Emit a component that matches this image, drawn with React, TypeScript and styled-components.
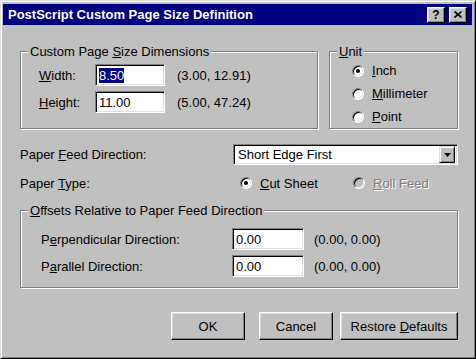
import styled, { createGlobalStyle } from 'styled-components';

const GlobalStyle = createGlobalStyle`
  html, body {
    margin: 0;
    padding: 0;
    background: #c0c0c0;
  }
  body {
    font-family: "Liberation Sans", Arial, sans-serif;
    font-size: 13px;
    color: #000;
  }
`;

const Window = styled.div`
  box-sizing: border-box;
  width: 476px;
  height: 359px;
  background: #c0c0c0;
  border: 1px solid;
  border-color: #dfdfdf #000 #000 #dfdfdf;
  box-shadow: inset 1px 1px 0 #fff, inset -1px -1px 0 #808080;
  padding: 3px 3px 2px 2px;
  display: flex;
  flex-direction: column;
`;

const TitleBar = styled.div`
  height: 21px;
  background: #000080;
  color: #fff;
  display: flex;
  align-items: center;
  padding: 0 5px 0 5px;
  font-weight: bold;
  font-size: 13px;
`;

const TitleText = styled.span`
  flex: 1;
  white-space: nowrap;
`;

const TitleButton = styled.button`
  box-sizing: border-box;
  width: 18px;
  height: 16px;
  margin-left: 4px;
  padding: 0;
  background: #c0c0c0;
  border: 1px solid;
  border-color: #fff #000 #000 #fff;
  box-shadow: inset -1px -1px 0 #808080, inset 1px 1px 0 #dfdfdf;
  display: flex;
  align-items: center;
  justify-content: center;
  font-family: "Liberation Sans", Arial, sans-serif;
  font-weight: bold;
  font-size: 12px;
  color: #000;
  line-height: 1;
`;

const Content = styled.div`
  flex: 1;
  display: flex;
  flex-direction: column;
  padding: 0 14px 0 17px;
`;

const TopRow = styled.div`
  display: flex;
  gap: 11px;
  margin-top: 26px;
  height: 78px;
`;

const GroupBox = styled.div<{ $width?: number }>`
  box-sizing: border-box;
  ${({ $width }) => ($width ? `width: ${$width}px;` : 'flex: 1;')}
  border: 1px solid #808080;
  box-shadow: inset 1px 1px 0 #fff, 1px 1px 0 #fff;
  display: flex;
  flex-direction: column;
`;

const Caption = styled.span`
  align-self: flex-start;
  margin: -8px 0 0 7px;
  padding: 0 2px;
  background: #c0c0c0;
  line-height: 15px;
`;

const Key = styled.span`
  text-decoration: underline;
  text-underline-offset: 1px;
`;

const DimGrid = styled.div`
  display: grid;
  grid-template-columns: 56px 70px auto;
  grid-auto-rows: 22px;
  row-gap: 5px;
  align-items: center;
  padding: 5px 0 0 18px;
`;

const OffsetGrid = styled.div`
  display: grid;
  grid-template-columns: 191px 72px auto;
  grid-auto-rows: 22px;
  row-gap: 5px;
  align-items: center;
  padding: 10px 0 0 20px;
`;

const Range = styled.span<{ $gap: number }>`
  padding-left: ${({ $gap }) => $gap}px;
  white-space: nowrap;
`;

const Field = styled.div`
  box-sizing: border-box;
  height: 22px;
  background: #fff;
  border: 1px solid;
  border-color: #808080 #fff #fff #808080;
  box-shadow: inset 1px 1px 0 #000, inset -1px -1px 0 #dfdfdf;
  display: flex;
  align-items: center;
  padding-left: 3px;
`;

const Selected = styled.span`
  background: #000080;
  color: #fff;
`;

const RadioList = styled.div`
  display: flex;
  flex-direction: column;
  padding-left: 22px;
`;

const RadioLabel = styled.label<{ $disabled?: boolean; $height?: number }>`
  display: flex;
  align-items: center;
  height: ${({ $height }) => $height ?? 23}px;
  gap: 8px;
  color: ${({ $disabled }) => ($disabled ? '#808080' : '#000')};
  text-shadow: ${({ $disabled }) => ($disabled ? '1px 1px 0 #fff' : 'none')};
`;

const RadioCircle = styled.span<{ $checked?: boolean; $disabled?: boolean }>`
  box-sizing: border-box;
  flex: 0 0 12px;
  width: 12px;
  height: 12px;
  border-radius: 50%;
  border: 1px solid;
  border-color: #808080 #fff #fff #808080;
  box-shadow: inset 1px 1px 0 #000, inset -1px -1px 0 #dfdfdf;
  background: ${({ $disabled }) => ($disabled ? '#c0c0c0' : '#fff')};
  display: flex;
  align-items: center;
  justify-content: center;

  &::after {
    content: '';
    width: 4px;
    height: 4px;
    border-radius: 50%;
    background: #000;
    display: ${({ $checked }) => ($checked ? 'block' : 'none')};
  }
`;

const FormRow = styled.div<{ $top: number; $height: number }>`
  display: grid;
  grid-template-columns: 213px 1fr;
  align-items: center;
  height: ${({ $height }) => $height}px;
  margin-top: ${({ $top }) => $top}px;
`;

const Choices = styled.div`
  display: flex;
  padding-left: 7px;
`;

const Choice = styled.div<{ $width: number }>`
  width: ${({ $width }) => $width}px;
`;

const Select = styled(Field)`
  height: 21px;
  padding-left: 4px;
  padding-right: 2px;
  justify-content: space-between;
`;

const ArrowButton = styled.span`
  box-sizing: border-box;
  width: 16px;
  height: 17px;
  background: #c0c0c0;
  border: 1px solid;
  border-color: #dfdfdf #000 #000 #dfdfdf;
  box-shadow: inset 1px 1px 0 #fff, inset -1px -1px 0 #808080;
  display: flex;
  align-items: center;
  justify-content: center;
`;

const OffsetBox = styled(GroupBox)`
  margin-top: 17px;
  height: 78px;
  flex: none;
`;

const ButtonRow = styled.div`
  display: flex;
  justify-content: flex-end;
  margin-top: 24px;
`;

const PushButton = styled.button<{ $width: number; $gap: number }>`
  box-sizing: border-box;
  width: ${({ $width }) => $width}px;
  height: 28px;
  margin-left: ${({ $gap }) => $gap}px;
  padding: 0;
  background: #c0c0c0;
  border: 1px solid;
  border-color: #fff #000 #000 #fff;
  box-shadow: inset -1px -1px 0 #808080, inset 1px 1px 0 #dfdfdf;
  font-family: "Liberation Sans", Arial, sans-serif;
  font-size: 13px;
  color: #000;
`;

const Radio = ({
  checked,
  disabled,
  height,
  children,
}: {
  checked?: boolean;
  disabled?: boolean;
  height?: number;
  children: React.ReactNode;
}) => (
  <RadioLabel $disabled={disabled} $height={height}>
    <RadioCircle $checked={checked} $disabled={disabled} />
    <span>{children}</span>
  </RadioLabel>
);

const App = () => {
  return (
    <>
      <GlobalStyle />
      <Window>
        <TitleBar>
          <TitleText>PostScript Custom Page Size Definition</TitleText>
          <TitleButton>?</TitleButton>
          <TitleButton>
            <svg width="8" height="7" viewBox="0 0 8 7">
              <path d="M0.5 0.5 L7.5 6.5 M7.5 0.5 L0.5 6.5" stroke="#000" strokeWidth="1.6" />
            </svg>
          </TitleButton>
        </TitleBar>
        <Content>
          <TopRow>
            <GroupBox $width={298}>
              <Caption>
                Custom Page <Key>S</Key>ize Dimensions
              </Caption>
              <DimGrid>
                <span>
                  <Key>W</Key>idth:
                </span>
                <Field>
                  <Selected>8.50</Selected>
                </Field>
                <Range $gap={12}>(3.00, 12.91)</Range>
                <span>
                  <Key>H</Key>eight:
                </span>
                <Field>11.00</Field>
                <Range $gap={12}>(5.00, 47.24)</Range>
              </DimGrid>
            </GroupBox>
            <GroupBox>
              <Caption>
                <Key>U</Key>nit
              </Caption>
              <RadioList>
                <Radio checked>
                  <Key>I</Key>nch
                </Radio>
                <Radio>
                  <Key>M</Key>illimeter
                </Radio>
                <Radio>
                  <Key>P</Key>oint
                </Radio>
              </RadioList>
            </GroupBox>
          </TopRow>

          <FormRow $top={15} $height={21}>
            <span>
              Paper <Key>F</Key>eed Direction:
            </span>
            <Select>
              <span>Short Edge First</span>
              <ArrowButton>
                <svg width="7" height="4" viewBox="0 0 7 4">
                  <path d="M0 0 H7 L3.5 4 Z" fill="#000" />
                </svg>
              </ArrowButton>
            </Select>
          </FormRow>

          <FormRow $top={8} $height={20}>
            <span>
              Paper <Key>T</Key>ype:
            </span>
            <Choices>
              <Choice $width={113}>
                <Radio checked height={20}>
                  <Key>C</Key>ut Sheet
                </Radio>
              </Choice>
              <Choice $width={100}>
                <Radio disabled height={20}>
                  <Key>R</Key>oll Feed
                </Radio>
              </Choice>
            </Choices>
          </FormRow>

          <OffsetBox>
            <Caption>
              <Key>O</Key>ffsets Relative to Paper Feed Direction
            </Caption>
            <OffsetGrid>
              <span>
                P<Key>e</Key>rpendicular Direction:
              </span>
              <Field>0.00</Field>
              <Range $gap={10}>(0.00, 0.00)</Range>
              <span>
                P<Key>a</Key>rallel Direction:
              </span>
              <Field>0.00</Field>
              <Range $gap={10}>(0.00, 0.00)</Range>
            </OffsetGrid>
          </OffsetBox>

          <ButtonRow>
            <PushButton $width={74} $gap={0}>
              OK
            </PushButton>
            <PushButton $width={74} $gap={14}>
              Cancel
            </PushButton>
            <PushButton $width={118} $gap={7}>
              Restore <Key>D</Key>efaults
            </PushButton>
          </ButtonRow>
        </Content>
      </Window>
    </>
  );
};

export default App;
